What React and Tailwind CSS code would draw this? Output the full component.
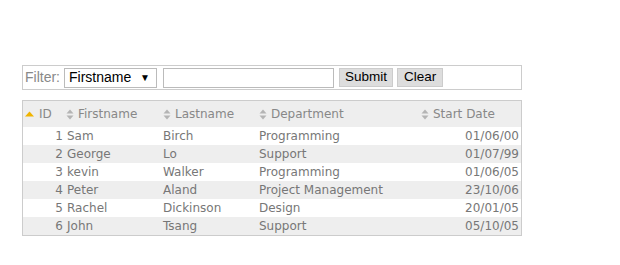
import React from "react";

const rows = [
  [1, "Sam", "Birch", "Programming", "01/06/00"],
  [2, "George", "Lo", "Support", "01/07/99"],
  [3, "kevin", "Walker", "Programming", "01/06/05"],
  [4, "Peter", "Aland", "Project Management", "23/10/06"],
  [5, "Rachel", "Dickinson", "Design", "20/01/05"],
  [6, "John", "Tsang", "Support", "05/10/05"],
];

function SortIcon() {
  return (
    <svg width="8" height="11" viewBox="0 0 8 11" className="shrink-0">
      <path d="M0.5 4.5 L4 0.5 L7.5 4.5 Z" fill="#b4b4b4" />
      <path d="M0.5 6.5 L4 10.5 L7.5 6.5 Z" fill="#b4b4b4" />
    </svg>
  );
}

function UpIcon() {
  return (
    <svg width="9" height="6" viewBox="0 0 9 6" className="shrink-0">
      <path d="M0 5.5 L4.5 0.5 L9 5.5 Z" fill="#f0b400" />
    </svg>
  );
}

export default function App() {
  return (
    <div className="w-[620px] h-[265px] bg-white pt-[65px] pl-[22px]">
      <div
        className="w-[500px] h-[25px] border border-[#cccccc] flex items-center pl-[2px] text-[14px] text-[#888888]"
        style={{ fontFamily: '"Liberation Sans", Arial, sans-serif' }}
      >
        <span className="mr-[4px]">Filter:</span>
        <div className="w-[93px] h-[20px] border border-[#bbbbbb] flex items-center justify-between pl-[4px] pr-[6px] text-black">
          <span>Firstname</span>
          <span className="text-[10px]">▼</span>
        </div>
        <div className="ml-[6px] w-[171px] h-[20px] border border-[#bbbbbb] bg-white" />
        <div className="ml-[5px] h-[19px] px-[5px] flex items-center bg-[#dddddd] border border-[#cccccc] text-black text-[13.5px]">
          Submit
        </div>
        <div className="ml-[4px] h-[19px] px-[6px] flex items-center bg-[#dddddd] border border-[#cccccc] text-black text-[13.5px]">
          Clear
        </div>
      </div>

      <div
        className="mt-[10px] w-[500px] border border-[#cccccc] text-[12px] text-[#777777]"
        style={{ fontFamily: '"DejaVu Sans", Verdana, sans-serif' }}
      >
        <div className="h-[26px] bg-[#eeeeee] flex items-center text-[#888888]">
          <div className="w-[41px] flex items-center gap-[5px] pl-[2px]">
            <UpIcon />
            <span>ID</span>
          </div>
          <div className="w-[97px] flex items-center gap-[4px] pl-[2px]">
            <SortIcon />
            <span>Firstname</span>
          </div>
          <div className="w-[96px] flex items-center gap-[4px] pl-[2px]">
            <SortIcon />
            <span>Lastname</span>
          </div>
          <div className="w-[162px] flex items-center gap-[4px] pl-[2px]">
            <SortIcon />
            <span>Department</span>
          </div>
          <div className="flex-1 flex items-center gap-[4px] pl-[2px]">
            <SortIcon />
            <span>Start Date</span>
          </div>
        </div>
        {rows.map((r, i) => (
          <div
            key={r[0]}
            className={`h-[18px] flex items-center ${i % 2 === 1 ? "bg-[#eeeeee]" : "bg-white"}`}
          >
            <div className="w-[41px] text-right pr-[1px]">{r[0]}</div>
            <div className="w-[97px] pl-[3px]">{r[1]}</div>
            <div className="w-[96px] pl-[2px]">{r[2]}</div>
            <div className="w-[162px] pl-[2px]">{r[3]}</div>
            <div className="flex-1 text-right pr-[2px]">{r[4]}</div>
          </div>
        ))}
      </div>
    </div>
  );
}
